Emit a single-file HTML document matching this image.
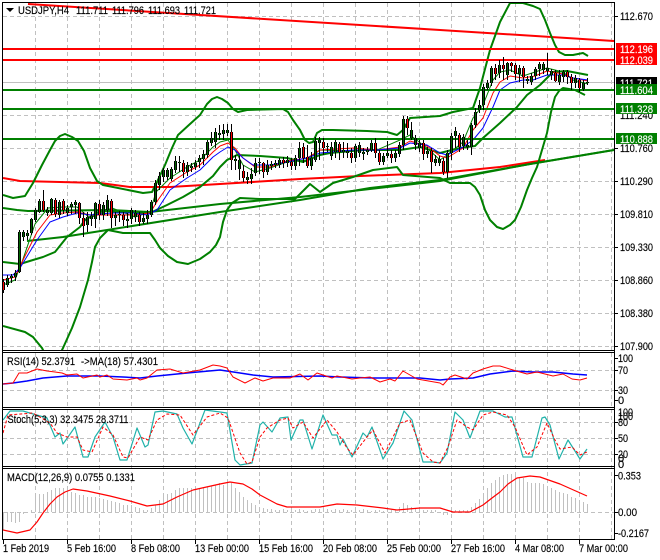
<!DOCTYPE html>
<html><head><meta charset="utf-8"><style>
html,body{margin:0;padding:0;background:#fff;width:660px;height:560px;overflow:hidden}
svg{display:block}
text{font-family:"Liberation Sans",sans-serif;font-size:11px;fill:#000;stroke:#000;stroke-width:.15}
.w{fill:#fff;stroke:#fff}
.l{fill:none;stroke-linejoin:round}
.b{fill:none;stroke:#008000;stroke-width:2;stroke-linejoin:round}
</style></head><body>
<svg width="660" height="560" viewBox="0 0 660 560" xmlns="http://www.w3.org/2000/svg">
<defs>
<clipPath id="c0"><rect x="3" y="3" width="611" height="347"/></clipPath>
<clipPath id="c1"><rect x="3" y="353" width="611" height="54"/></clipPath>
<clipPath id="c2"><rect x="3" y="410" width="611" height="56"/></clipPath>
<clipPath id="c3"><rect x="3" y="469" width="611" height="70"/></clipPath>
<path id="gb" d="M7.5 278V285M11.5 276V278M15.5 273V277M19.5 232V272M23.5 232V237M27.5 233V236M31.5 219V233M35.5 210V220M39.5 201V212M47.5 210V213M51.5 199V213M59.5 202V215M67.5 208V213M71.5 204V207M75.5 202V205M87.5 217V225M91.5 216V219M95.5 203V219M103.5 205V215M107.5 200V210M115.5 215V218M119.5 214V215M127.5 219V221M131.5 210V219M135.5 213V217M143.5 218V222M147.5 215V219M151.5 202V215M155.5 183V202M159.5 176V185M163.5 170V177M167.5 170V177M171.5 169V179M175.5 161V170M179.5 162V163M187.5 165V172M191.5 166V168M195.5 163V167M199.5 158V162M203.5 154V159M207.5 142V155M211.5 138V143M215.5 132V142M219.5 133V135M223.5 130V134M227.5 130V133M235.5 159V161M239.5 160V169M247.5 177V180M251.5 174V179M255.5 163V173M259.5 162V163M267.5 165V172M271.5 164V166M275.5 163V165M279.5 160V165M287.5 160V163M295.5 158V166M299.5 148V158M311.5 158V166M315.5 141V160M319.5 140V143M327.5 146V147M331.5 147V156M335.5 142V152M343.5 150V152M347.5 151V153M355.5 146V158M359.5 145V153M363.5 152V154M367.5 150V152M371.5 143V150M383.5 156V162M387.5 153V156M395.5 153V158M399.5 145V154M403.5 119V145M411.5 130V138M415.5 138V145M419.5 143V148M427.5 151V154M435.5 159V163M439.5 159V163M447.5 153V172M451.5 136V153M455.5 131V136M463.5 137V146M467.5 145V147M471.5 125V147M475.5 112V125M479.5 105V110M483.5 87V105M487.5 83V88M491.5 68V83M499.5 65V73M507.5 63V75M519.5 68V74M527.5 79V81M531.5 76V82M535.5 69V76M539.5 64V69M543.5 64V70M547.5 68V71M551.5 71V75M559.5 75V82M563.5 72V77M575.5 78V83M583.5 83V89M587.5 82V83"/>
<path id="rb" d="M3.5 282V290M43.5 201V210M55.5 200V214M63.5 201V210M79.5 203V218M83.5 218V226M99.5 204V215M111.5 201V218M123.5 215V220M139.5 215V222M183.5 163V172M231.5 132V160M243.5 171V178M263.5 163V172M283.5 160V163M291.5 162V166M303.5 147V158M307.5 157V166M323.5 142V148M339.5 144V152M351.5 153V158M375.5 143V153M379.5 153V162M391.5 154V158M407.5 119V128M423.5 143V154M431.5 151V162M443.5 161V172M459.5 135V147M495.5 68V74M503.5 65V69M511.5 63V66M515.5 65V74M523.5 68V77M555.5 73V81M567.5 72V77M571.5 77V83M579.5 80V88"/>
</defs>
<rect width="660" height="560" fill="#fff"/>

<!-- grid -->
<g stroke="#c0c0c0" stroke-width="1" stroke-dasharray="4 3" fill="none">
<path d="M35.5 3V539M67.5 3V539M99.5 3V539M131.5 3V539M163.5 3V539M195.5 3V539M227.5 3V539M259.5 3V539M291.5 3V539M323.5 3V539M355.5 3V539M387.5 3V539M419.5 3V539M451.5 3V539M483.5 3V539M515.5 3V539M547.5 3V539M579.5 3V539M611.5 3V539"/>
<path d="M3 16.5H614M3 49.5H614M3 82.5H614M3 115.5H614M3 148.5H614M3 181.5H614M3 214.5H614M3 247.5H614M3 280.5H614M3 313.5H614M3 346.5H614"/>
<path d="M3 370.5H614M3 390.5H614M3 422.5H614M3 438.5H614M3 454.5H614M3 512.5H614"/>
</g>
<rect x="3" y="82" width="611" height="1" fill="#c0c0c0"/>

<!-- main chart -->
<g clip-path="url(#c0)">
<path class="l" stroke="#f00" stroke-width="2" d="M28 4L200 15L440 30L614 41"/>
<path class="l" stroke="#f00" stroke-width="2" d="M3 178L20 181L60 182L100 183L130 187L170 187L220 184L300 179L360 176L440 173L500 167L545 160"/>
<path class="b" d="M3 208L17 210L28 211L110 210L150 212L220 204L300 197L370 189L440 181L530 164L614 150"/>
<path class="b" d="M27 241L63 237L107 230L220 212L300 200L370 188L440 180L530 164L614 150"/>
<path class="b" d="M3 195L13 198L25 196L33 183L42 165L50 150L55 141L60 136L65 134L72 137L78 141L84 151L90 168L97 181L103 185L143 193L152 192L157 182L165 165L172 148L178 135L190 124L200 115L207 104L212 99L217 97L222 99L228 103L233 109L238 112L247 110L283 109L288 112L293 120L300 130L305 140L309 143L313 142L317 133L322 130L333 130L367 131L387 132L397 135L403 130L410 118L440 116L453 112L473 108L480 88L490 50L500 22L510 3L523 3L533 6L540 9L545 20L550 33L555 45L559 52L565 55L573 55L583 53L588 56"/>
<path class="b" d="M3 326L25 332L33 337L42 348L44 352M61 352L63 348L72 328L80 307L88 280L92 262L95 247L100 238L108 230L123 233L150 233L155 240L160 248L168 256L177 262L188 264L200 259L210 252L216 245L220 237L223 222L227 210L232 203L240 198L260 199L295 199L310 184L320 192L333 183L353 177L373 170L397 167L403 175L440 178L450 183L470 183L475 187L480 195L485 210L490 220L497 227L503 229L510 225L515 220L521 207L527 190L532 178L537 167L542 150L547 133L551 112L555 97L559 91L563 88L575 90L585 95"/>
<path class="b" d="M3 262L20 264L33 260L43 257L55 252L67 237L80 227L85 220L100 211L130 212L150 213L167 205L183 197L200 187L213 176L220 167L227 160L237 155L260 156L287 158L303 162L320 155L330 153L363 150L400 150L420 147L440 153L460 148L475 146L483 138L500 123L517 107L527 95L540 85L553 72L567 71L588 75"/>
<path class="l" stroke="#008000" d="M3 285L15 280L22 262L35 224L48 208L63 207L77 207L90 218L112 208L135 217L150 212L156 192L170 178L187 167L200 160L213 147L220 142L228 140L235 150L243 165L255 172L270 168L287 162L307 160L320 150L353 151L377 150L400 140L410 135L427 148L440 160L447 155L463 142L473 118L483 105L493 80L500 72L510 70L523 76L535 72L547 68L563 72L573 80L588 84"/>
<path class="l" stroke="#f00" d="M3 280L15 277L24 258L37 232L50 215L63 213L77 212L90 215L112 215L135 215L150 213L158 200L170 183L187 172L200 165L213 152L220 146L228 143L235 148L243 158L255 167L270 167L287 161L307 158L320 150L353 148L377 150L400 147L410 141L427 146L440 156L447 158L463 148L473 130L483 118L493 93L500 82L510 76L523 78L535 76L547 71L563 74L573 78L588 81"/>
<path class="l" stroke="#00f" d="M3 275L13 275L20 268L23 263L37 240L50 222L63 217L77 213L90 215L112 213L133 213L147 215L157 210L170 190L187 178L200 170L213 157L220 152L228 147L235 150L243 158L253 165L270 165L287 162L307 158L320 153L353 150L377 150L400 148L410 143L427 145L440 153L447 155L463 147L473 140L483 128L493 107L500 90L510 83L523 80L533 80L547 75L563 75L573 78L588 80"/>
<rect x="3" y="48" width="613" height="2" fill="#f00"/>
<rect x="3" y="59" width="613" height="2" fill="#f00"/>
<rect x="3" y="89" width="613" height="2" fill="#008000"/>
<rect x="3" y="108" width="613" height="2" fill="#008000"/>
<rect x="3" y="138" width="613" height="2" fill="#008000"/>
<!-- wicks -->
<path stroke="#000" fill="none" d="M3.5 279V293M7.5 275V287M11.5 274V283M15.5 270V281M19.5 230V273M23.5 230V241M27.5 230V240M31.5 218V235M35.5 208V222M39.5 199V213M43.5 190V212M47.5 207V216M51.5 198V215M55.5 198V217M59.5 200V218M63.5 199V214M67.5 205V216M71.5 202V214M75.5 200V214M79.5 202V224M83.5 212V237M87.5 212V232M91.5 212V226M95.5 202V228M99.5 200V220M103.5 202V220M107.5 195V216M111.5 199V228M115.5 212V226M119.5 211V222M123.5 212V226M127.5 213V228M131.5 208V224M135.5 210V222M139.5 212V226M143.5 213V224M147.5 210V224M151.5 200V217M155.5 180V205M159.5 172V190M163.5 168V182M167.5 168V180M171.5 167V181M175.5 156V173M179.5 156V172M183.5 160V178M187.5 162V176M191.5 163V172M195.5 160V170M199.5 155V168M203.5 150V165M207.5 140V158M211.5 132V146M215.5 128V148M219.5 125V140M223.5 124V140M227.5 124V136M231.5 124V170M235.5 155V170M239.5 156V180M243.5 165V182M247.5 172V184M251.5 168V184M255.5 158V176M259.5 158V174M263.5 162V178M267.5 160V175M271.5 161V170M275.5 160V168M279.5 158V168M283.5 157V168M287.5 156V167M291.5 158V170M295.5 155V170M299.5 142V166M303.5 143V163M307.5 145V168M311.5 152V170M315.5 137V162M319.5 137V160M323.5 138V155M327.5 143V152M331.5 142V160M335.5 140V158M339.5 142V160M343.5 142V158M347.5 143V158M351.5 148V163M355.5 144V162M359.5 142V157M363.5 148V160M367.5 147V155M371.5 140V152M375.5 138V158M379.5 150V165M383.5 153V165M387.5 141V158M391.5 150V163M395.5 150V162M399.5 142V157M403.5 116V150M407.5 116V135M411.5 122V140M415.5 135V150M419.5 140V152M423.5 140V160M427.5 147V158M431.5 148V173M435.5 155V166M439.5 156V166M443.5 158V175M447.5 150V178M451.5 133V160M455.5 127V148M459.5 133V152M463.5 134V150M467.5 140V150M471.5 123V155M475.5 108V128M479.5 100V113M483.5 84V110M487.5 80V90M491.5 66V86M495.5 64V80M499.5 60V78M503.5 57V80M507.5 62V80M511.5 62V72M515.5 63V80M519.5 65V82M523.5 66V88M527.5 76V84M531.5 73V85M535.5 67V80M539.5 62V76M543.5 62V74M547.5 53V75M551.5 69V80M555.5 70V82M559.5 70V85M563.5 70V82M567.5 70V84M571.5 74V90M575.5 75V88M579.5 78V92M583.5 80V91M587.5 78V85"/>
<use href="#gb" fill="none" stroke="#000" stroke-width="3"/>
<use href="#rb" fill="none" stroke="#000" stroke-width="3"/>
<use href="#gb" fill="none" stroke="#006400" stroke-width="1"/>
<use href="#rb" fill="none" stroke="#f00" stroke-width="1"/>
</g>

<!-- RSI -->
<g clip-path="url(#c1)">
<path class="l" stroke="#00f" stroke-width="1.5" d="M3 384L13 383L27 381L43 378L67 376L100 376L123 377L140 378L157 376L187 373L220 370L240 373L253 375L273 377L320 376L340 377L373 378L400 378L420 378L440 380L450 379L473 378L490 374L513 371L533 372L553 372L573 374L587 375"/>
<path class="l" stroke="#f00" d="M3 384L13 383L19 373L27 373L37 369L47 371L55 372L62 373L67 375L77 374L83 378L97 375L100 377L107 375L113 379L127 380L137 378L140 380L147 378L157 370L170 369L183 373L200 370L213 365L220 366L227 368L233 377L245 383L255 378L263 381L273 378L290 378L300 374L308 380L317 373L323 375L332 378L337 376L352 379L360 378L370 377L380 382L390 379L395 381L403 371L417 379L440 383L443 385L450 377L455 375L467 379L473 373L483 369L493 366L500 366L513 370L527 374L537 372L553 376L563 374L572 379L580 380L587 378"/>
</g>

<!-- Stoch -->
<g clip-path="url(#c2)">
<path class="l" stroke="#20b2aa" stroke-width="1.2" d="M3 420L10 411L23 411L47 418L55 437L60 433L63 444L68 437L75 427L83 457L88 457L95 437L105 422L113 437L120 460L127 460L137 428L145 447L148 445L155 412L163 411L177 414L183 428L192 444L205 410L220 412L227 413L235 460L240 465L252 463L260 425L263 422L272 432L280 418L288 417L291 440L300 420L303 420L312 449L323 415L332 435L337 435L340 445L343 439L352 457L363 433L367 437L372 427L383 459L393 443L404 411L412 420L423 462L433 462L440 463L447 453L455 412L463 420L470 438L480 411L493 411L505 417L512 417L523 457L532 457L542 418L545 417L550 425L559 459L568 440L580 459L587 449"/>
<path class="l" stroke="#f00" stroke-dasharray="3 2" d="M3 433L8 415L33 413L50 423L57 433L67 437L77 437L83 450L92 452L103 427L113 435L123 457L128 458L140 437L148 440L157 420L167 414L180 415L193 435L207 417L220 413L228 418L240 453L247 464L252 462L260 437L267 428L280 420L288 418L293 428L303 422L313 438L327 420L337 432L347 448L353 455L367 437L373 430L385 453L400 423L410 420L423 453L433 462L440 463L448 447L457 420L467 427L473 430L483 415L493 412L507 415L515 427L527 455L537 447L547 423L555 440L560 449L572 447L580 455L587 452"/>
</g>

<!-- MACD -->
<g clip-path="url(#c3)">
<path stroke="#c0c0c0" fill="none" d="M3.5 512V530M7.5 512V522M11.5 512V522M15.5 512V523M19.5 512V522M23.5 512V514M31.5 512V510M35.5 512V497M39.5 512V494M43.5 512V494M47.5 512V492M51.5 512V490M55.5 512V488M59.5 512V488M63.5 512V488M67.5 512V489M71.5 512V492M75.5 512V493M79.5 512V495M83.5 512V495M87.5 512V497M91.5 512V497M95.5 512V497M99.5 512V498M103.5 512V499M107.5 512V500M111.5 512V501M115.5 512V502M119.5 512V503M123.5 512V505M127.5 512V505M131.5 512V505M135.5 512V507M139.5 512V508M143.5 512V510M147.5 512V510M151.5 512V508M155.5 512V505M159.5 512V500M163.5 512V495M167.5 512V494M171.5 512V493M175.5 512V490M179.5 512V488M183.5 512V488M187.5 512V488M191.5 512V488M195.5 512V488M199.5 512V488M203.5 512V487M207.5 512V487M211.5 512V486M215.5 512V485M219.5 512V483M223.5 512V485M227.5 512V483M231.5 512V483M235.5 512V488M239.5 512V492M243.5 512V497M247.5 512V500M251.5 512V503M255.5 512V505M259.5 512V507M263.5 512V508M267.5 512V509M271.5 512V509M275.5 512V510M279.5 512V510M283.5 512V509M287.5 512V510M291.5 512V511M295.5 512V510M299.5 512V509M303.5 512V510M307.5 512V511M311.5 512V510M315.5 512V509M319.5 512V509M323.5 512V508M327.5 512V509M331.5 512V510M335.5 512V509M339.5 512V510M343.5 512V509M347.5 512V510M351.5 512V510M355.5 512V510M359.5 512V510M363.5 512V509M367.5 512V510M371.5 512V511M375.5 512V510M379.5 512V510M383.5 512V511M387.5 512V511M391.5 512V510M395.5 512V510M399.5 512V507M403.5 512V503M407.5 512V505M411.5 512V507M415.5 512V508M419.5 512V509M423.5 512V510M427.5 512V510M431.5 512V510M435.5 512V510M443.5 512V515M447.5 512V515M455.5 512V510M459.5 512V510M463.5 512V510M467.5 512V510M471.5 512V507M475.5 512V503M479.5 512V499M483.5 512V494M487.5 512V488M491.5 512V483M495.5 512V480M499.5 512V477M503.5 512V475M507.5 512V474M511.5 512V474M515.5 512V475M519.5 512V477M523.5 512V478M527.5 512V482M531.5 512V483M535.5 512V483M539.5 512V483M543.5 512V484M547.5 512V486M551.5 512V488M555.5 512V490M559.5 512V492M563.5 512V493M567.5 512V494M571.5 512V497M575.5 512V498M579.5 512V500M583.5 512V502M587.5 512V504"/>
<path class="l" stroke="#f00" stroke-width="1.2" d="M3 530L17 533L30 530L37 522L43 513L50 504L57 497L65 492L73 489L87 491L110 496L130 501L147 506L163 504L177 497L193 490L220 484L230 482L243 484L252 489L260 495L277 504L287 507L320 507L337 504L357 505L383 508L397 510L420 508L440 508L453 512L470 512L483 505L492 498L500 492L508 484L517 478L530 476L540 477L560 484L587 496"/>
</g>

<!-- frame -->
<g fill="#000">
<rect x="2" y="2" width="1" height="537"/>
<rect x="2" y="2" width="613" height="1"/>
<rect x="614" y="2" width="1" height="537"/>
<rect x="2" y="350" width="613" height="1"/><rect x="2" y="352" width="613" height="1"/>
<rect x="2" y="407" width="613" height="1"/><rect x="2" y="409" width="613" height="1"/>
<rect x="2" y="466" width="613" height="1"/><rect x="2" y="468" width="613" height="1"/>
<rect x="2" y="539" width="613" height="1"/>
<path d="M6 8H14L10 12Z"/>
<path stroke="#000" d="M3.5 539V544M67.5 539V544M131.5 539V544M195.5 539V544M259.5 539V544M323.5 539V544M387.5 539V544M451.5 539V544M515.5 539V544M579.5 539V544M614 16.5H618M614 148.5H618M614 181.5H618M614 214.5H618M614 247.5H618M614 280.5H618M614 313.5H618M614 346.5H618M614 358.5H618M614 370.5H618M614 390.5H618M614 400.5H618M614 422.5H618M614 438.5H618M614 454.5H618M614 475.5H618M614 512.5H618M614 533.5H618"/>
</g>

<!-- title -->
<text x="18" y="14" textLength="51" lengthAdjust="spacingAndGlyphs">USDJPY,H4</text>
<text x="76" y="14" textLength="32" lengthAdjust="spacingAndGlyphs">111.711</text>
<text x="112" y="14" textLength="32" lengthAdjust="spacingAndGlyphs">111.796</text>
<text x="148" y="14" textLength="32" lengthAdjust="spacingAndGlyphs">111.693</text>
<text x="184" y="14" textLength="32" lengthAdjust="spacingAndGlyphs">111.721</text>

<!-- pane labels -->
<text x="7" y="365" textLength="68" lengthAdjust="spacingAndGlyphs">RSI(14) 52.3791</text>
<text x="81" y="365" textLength="77" lengthAdjust="spacingAndGlyphs">-&gt;MA(18) 57.4301</text>
<text x="7.5" y="423" textLength="121" lengthAdjust="spacingAndGlyphs">Stoch(5,3,3) 32.3475 28.3711</text>
<text x="7" y="481" textLength="128" lengthAdjust="spacingAndGlyphs">MACD(12,26,9) 0.0755 0.1331</text>

<!-- price axis -->
<g>
<text x="620" y="20" textLength="33" lengthAdjust="spacingAndGlyphs">112.670</text>
<text x="620" y="119" textLength="33" lengthAdjust="spacingAndGlyphs">111.240</text>
<text x="620" y="152" textLength="33" lengthAdjust="spacingAndGlyphs">110.760</text>
<text x="620" y="185" textLength="33" lengthAdjust="spacingAndGlyphs">110.290</text>
<text x="620" y="218" textLength="33" lengthAdjust="spacingAndGlyphs">109.810</text>
<text x="620" y="251" textLength="33" lengthAdjust="spacingAndGlyphs">109.330</text>
<text x="620" y="284" textLength="33" lengthAdjust="spacingAndGlyphs">108.860</text>
<text x="620" y="317" textLength="33" lengthAdjust="spacingAndGlyphs">108.380</text>
<text x="620" y="350" textLength="33" lengthAdjust="spacingAndGlyphs">107.900</text>
</g>
<rect x="616" y="43" width="41" height="11" fill="#f00"/>
<rect x="616" y="54" width="41" height="11" fill="#f00"/>
<text class="w" x="620" y="53" textLength="33" lengthAdjust="spacingAndGlyphs">112.196</text>
<text class="w" x="620" y="64" textLength="33" lengthAdjust="spacingAndGlyphs">112.039</text>
<rect x="616" y="77" width="41" height="11" fill="#000"/>
<text class="w" x="620" y="87" textLength="33" lengthAdjust="spacingAndGlyphs">111.721</text>
<rect x="616" y="84" width="41" height="11" fill="#008000"/>
<text class="w" x="620" y="94" textLength="33" lengthAdjust="spacingAndGlyphs">111.604</text>
<rect x="616" y="103" width="41" height="11" fill="#008000"/>
<text class="w" x="620" y="113" textLength="33" lengthAdjust="spacingAndGlyphs">111.328</text>
<rect x="616" y="133" width="41" height="11" fill="#008000"/>
<text class="w" x="620" y="143" textLength="33" lengthAdjust="spacingAndGlyphs">110.888</text>

<!-- indicator axis -->
<text x="618" y="362" textLength="15" lengthAdjust="spacingAndGlyphs">100</text>
<text x="618" y="374" textLength="10" lengthAdjust="spacingAndGlyphs">70</text>
<text x="618" y="394" textLength="10" lengthAdjust="spacingAndGlyphs">30</text>
<text x="618" y="404">0</text>
<text x="618" y="416" textLength="15" lengthAdjust="spacingAndGlyphs">100</text>
<text x="618" y="420" textLength="15" lengthAdjust="spacingAndGlyphs">100</text>
<text x="618" y="426" textLength="10" lengthAdjust="spacingAndGlyphs">80</text>
<text x="618" y="442" textLength="10" lengthAdjust="spacingAndGlyphs">50</text>
<text x="618" y="458" textLength="10" lengthAdjust="spacingAndGlyphs">20</text>
<text x="618" y="462">0</text>
<text x="618" y="468">0</text>
<text x="618" y="479.5" textLength="23" lengthAdjust="spacingAndGlyphs">0.353</text>
<text x="618" y="516" textLength="19" lengthAdjust="spacingAndGlyphs">0.00</text>
<text x="618" y="537" textLength="31" lengthAdjust="spacingAndGlyphs">-0.2167</text>

<!-- time axis -->
<text x="3" y="552" textLength="46" lengthAdjust="spacingAndGlyphs">1 Feb 2019</text>
<text x="67" y="552" textLength="49" lengthAdjust="spacingAndGlyphs">5 Feb 16:00</text>
<text x="131" y="552" textLength="49" lengthAdjust="spacingAndGlyphs">8 Feb 08:00</text>
<text x="195" y="552" textLength="54" lengthAdjust="spacingAndGlyphs">13 Feb 00:00</text>
<text x="259" y="552" textLength="54" lengthAdjust="spacingAndGlyphs">15 Feb 16:00</text>
<text x="323" y="552" textLength="54" lengthAdjust="spacingAndGlyphs">20 Feb 08:00</text>
<text x="387" y="552" textLength="54" lengthAdjust="spacingAndGlyphs">25 Feb 00:00</text>
<text x="451" y="552" textLength="54" lengthAdjust="spacingAndGlyphs">27 Feb 16:00</text>
<text x="515" y="552" textLength="49" lengthAdjust="spacingAndGlyphs">4 Mar 08:00</text>
<text x="579" y="552" textLength="49" lengthAdjust="spacingAndGlyphs">7 Mar 00:00</text>
</svg>
</body></html>
